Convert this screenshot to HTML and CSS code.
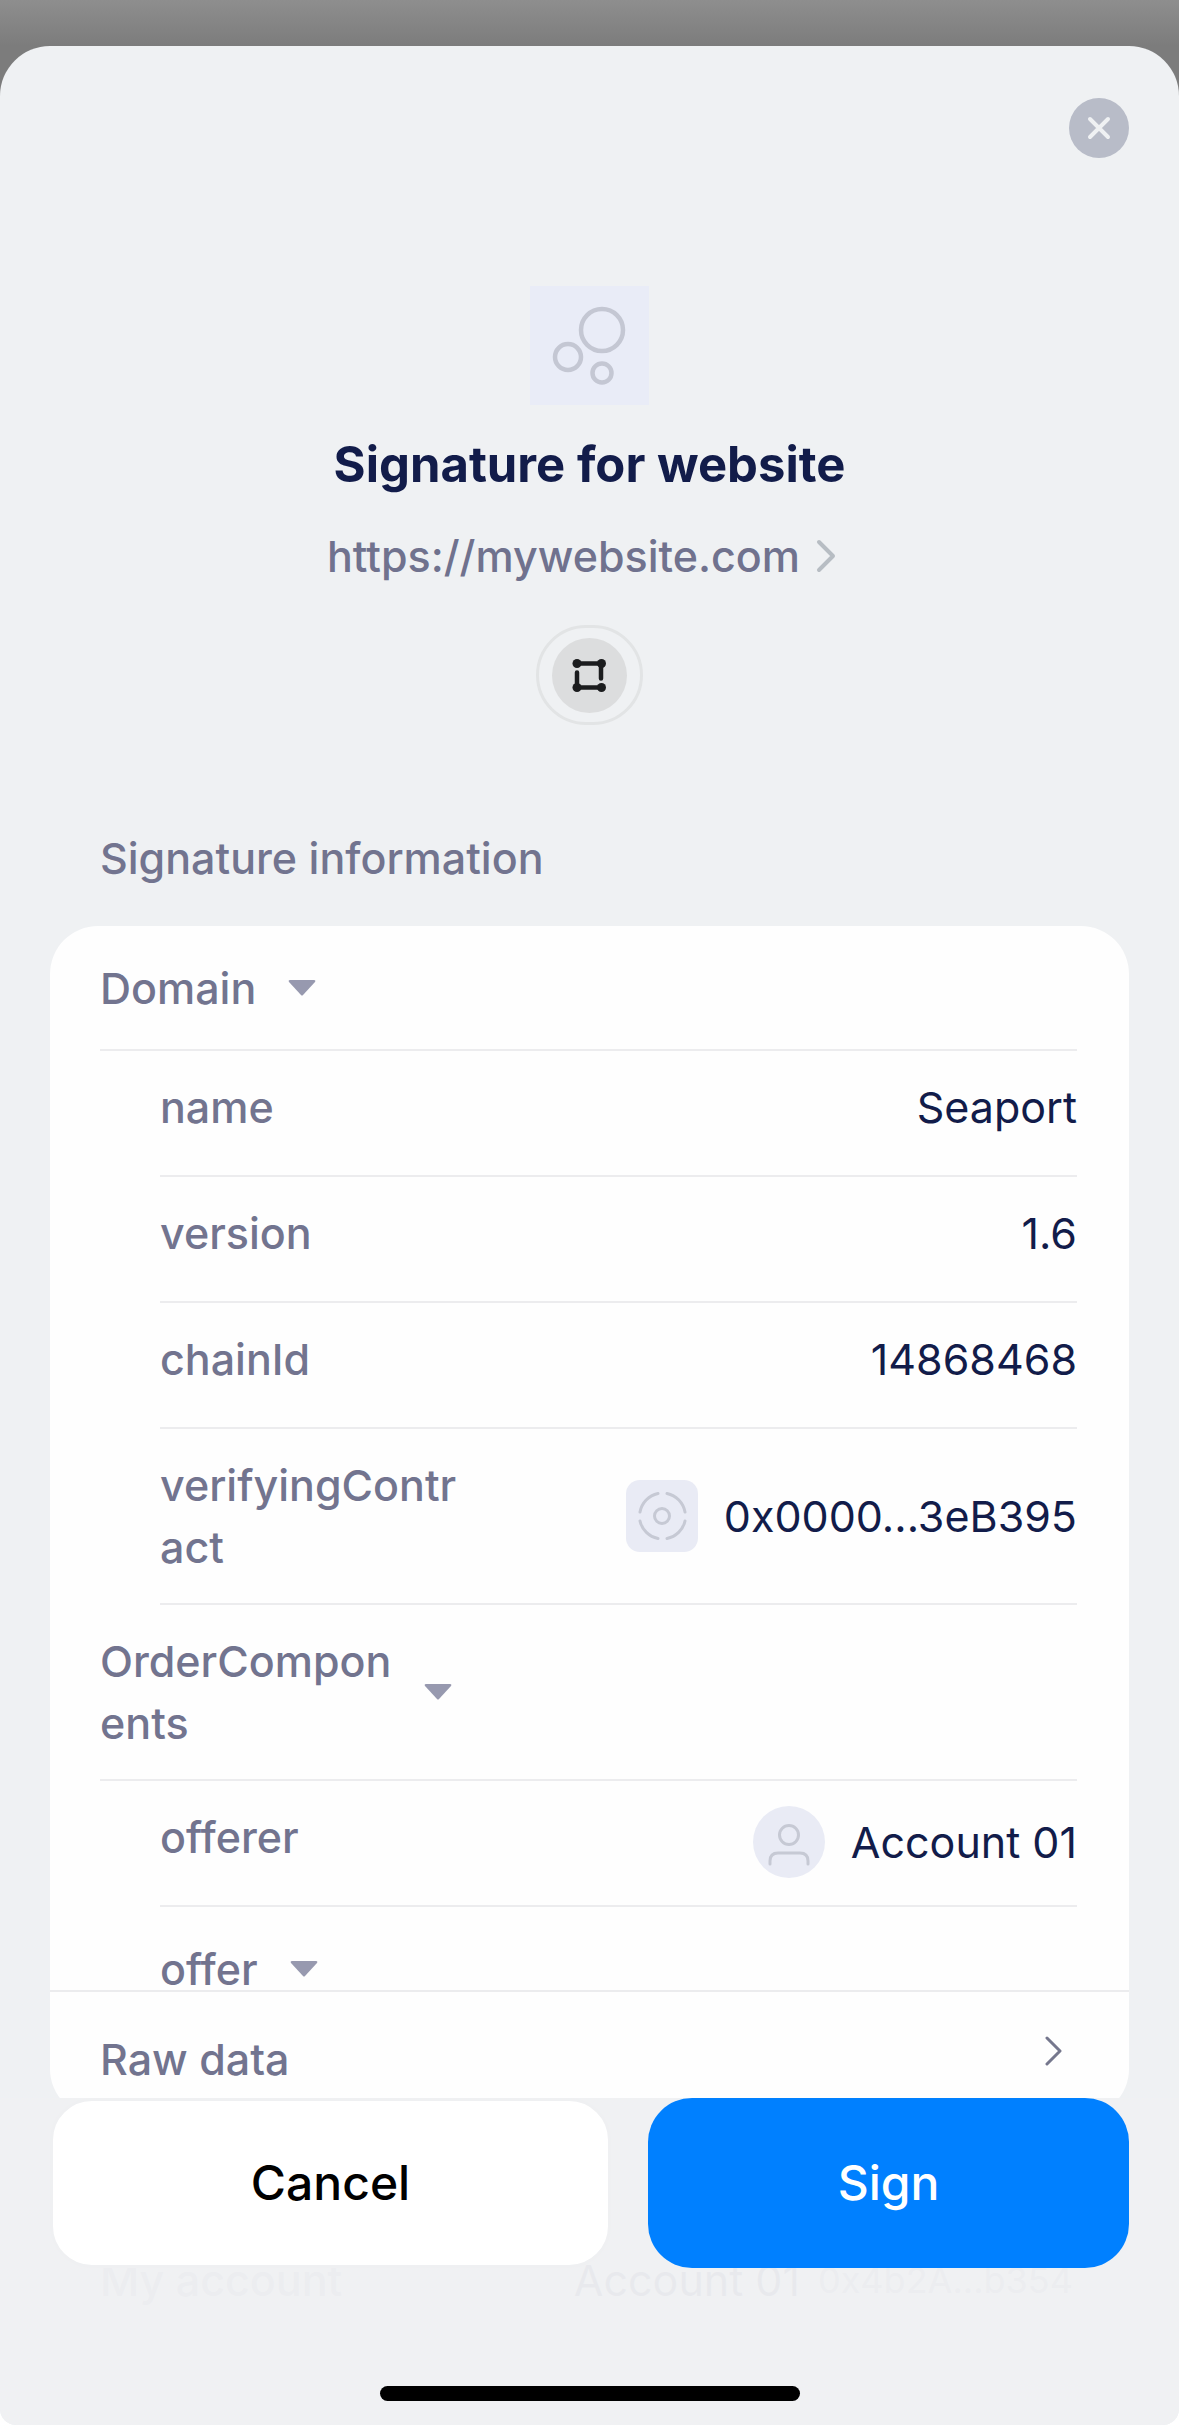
FILE: index.html
```html
<!DOCTYPE html>
<html lang="en">
<head>
    <meta charset="UTF-8">
    <meta name="viewport" content="width=device-width, initial-scale=1.0">
    <title>Signature for website</title>
    <link rel="stylesheet" href="styles.css">
</head>
<body>
    <div class="sheet">
        <div class="top">
            <button class="close" aria-label="Close">
                <svg width="60" height="60" viewBox="0 0 60 60" fill="none" stroke="#eff1f3" stroke-width="4" stroke-linecap="round">
                    <path d="M21 21l18 18M39 21L21 39"/>
                </svg>
            </button>
        </div>

        <header class="site">
            <svg class="site-icon" width="119" height="119" viewBox="0 0 119 119" fill="none" stroke="#c4c7d3" stroke-width="4.500">
                <circle cx="72" cy="44" r="21"/>
                <circle cx="38" cy="71" r="13"/>
                <circle cx="72" cy="87" r="9.500"/>
            </svg>
            <h1>Signature for website</h1>
            <a class="url" href="#">
                <span>https://mywebsite.com</span>
                <svg width="20" height="34" viewBox="0 0 20 34" fill="none" stroke="#b7bdc3" stroke-width="4" stroke-linecap="round" stroke-linejoin="round">
                    <path d="M3 3l14 14L3 31"/>
                </svg>
            </a>
            <div class="network">
                <svg width="75" height="75" viewBox="0 0 75 75">
                    <circle cx="37.5" cy="37.5" r="37.5" fill="#dcddde"/>
                    <g fill="#1b1c1e">
                        <path d="M25 25.500h24v15M49 49.500H25v-15" fill="none" stroke="#1b1c1e" stroke-width="4.500" stroke-linecap="round"/>
                        <circle cx="25" cy="25.500" r="4.500"/>
                        <circle cx="49.500" cy="25.500" r="4.500"/>
                        <circle cx="25" cy="49.500" r="4.500"/>
                        <circle cx="49.500" cy="49.500" r="4.500"/>
                    </g>
                </svg>
            </div>
        </header>

        <main>
            <h2>Signature information</h2>
            <div class="card">
                <div class="data">
                    <button class="row group">
                        <span class="label">Domain</span>
                        <svg class="caret" width="28" height="18" viewBox="0 0 28 18"><path d="M2 1h24q2 0 1 2L15 16q-1 1-2 0L1 3q-1-2 1-2z" fill="#9799af"/></svg>
                    </button>
                    <div class="row nested">
                        <span class="label">name</span>
                        <span class="value">Seaport</span>
                    </div>
                    <div class="row nested">
                        <span class="label">version</span>
                        <span class="value">1.6</span>
                    </div>
                    <div class="row nested">
                        <span class="label">chainId</span>
                        <span class="value">14868468</span>
                    </div>
                    <div class="row nested">
                        <span class="label">verifyingContr<wbr>act</span>
                        <span class="value">
                            <svg class="contract" width="72" height="72" viewBox="0 0 72 72" fill="none" stroke="#c6c9d4" stroke-width="3" stroke-linecap="round">
                                <circle cx="36" cy="36" r="7.500"/>
                                <path d="M41 13.500A23 23 0 0 1 59 32M59 41A23 23 0 0 1 41 58.500M32 58.500A23 23 0 0 1 14 41M14 32A23 23 0 0 1 32 13.500"/>
                            </svg>
                            0x0000...3eB395
                        </span>
                    </div>
                    <button class="row group">
                        <span class="label">OrderCompon<wbr>ents</span>
                        <svg class="caret" width="28" height="18" viewBox="0 0 28 18"><path d="M2 1h24q2 0 1 2L15 16q-1 1-2 0L1 3q-1-2 1-2z" fill="#9799af"/></svg>
                    </button>
                    <div class="row nested">
                        <span class="label">offerer</span>
                        <span class="value">
                            <svg class="avatar" width="72" height="72" viewBox="0 0 72 72" fill="none" stroke="#c6c9d4" stroke-width="3" stroke-linecap="round">
                                <circle cx="36" cy="29" r="9.500"/>
                                <path d="M17 58v-3q0-8 8-8h22q8 0 8 8v3"/>
                            </svg>
                            Account 01
                        </span>
                    </div>
                    <button class="row nested">
                        <span class="label">offer</span>
                        <svg class="caret" width="28" height="18" viewBox="0 0 28 18"><path d="M2 1h24q2 0 1 2L15 16q-1 1-2 0L1 3q-1-2 1-2z" fill="#9799af"/></svg>
                    </button>
                </div>
                <button class="raw">
                    <span>Raw data</span>
                    <svg width="18" height="46" viewBox="0 0 18 46" fill="none" stroke="#75778d" stroke-width="3" stroke-linecap="round" stroke-linejoin="round">
                        <path d="M2 2l13 13L2 28"/>
                    </svg>
                </button>
            </div>
            <div class="account">
                <span class="account-label">My account</span>
                <span>Account 01</span>
                <span class="account-address">0x4b2A...b354</span>
            </div>
        </main>

        <footer>
            <div class="actions">
                <button class="cancel">Cancel</button>
                <button class="sign">Sign</button>
            </div>
            <div class="home-bar"></div>
        </footer>
    </div>
</body>
</html>
```
FILE: styles.css
```css
* {
    box-sizing: border-box;
}
body {
    margin: 0;
    padding-top: 46px;
    min-height: 100vh;
    display: flex;
    background: #fff linear-gradient(#8e8e8e, #7c7c7c 46px) top / 100% 120px no-repeat;
    font-family: Inter, "Liberation Sans", sans-serif;
    font-size: 43px;
    line-height: 62px;
    color: #121c4a;
}
button {
    border: none;
    padding: 0;
    background: none;
    font: inherit;
    color: inherit;
    text-align: left;
    cursor: pointer;
}
svg {
    display: block;
    flex: none;
}
.sheet {
    position: relative;
    flex: 1;
    display: flex;
    flex-direction: column;
    background: #eff1f3;
    border-radius: 50px 50px 16px 16px;
    overflow: hidden;
}
.top {
    display: flex;
    justify-content: flex-end;
    padding: 52px 50px 0;
}
.close {
    width: 60px;
    height: 60px;
    border-radius: 50%;
    background: #b8bcc8;
}

/* website */
.site {
    display: flex;
    flex-direction: column;
    align-items: center;
    padding-top: 128px;
}
.site-icon {
    background: #e9ecf7;
}
h1 {
    margin: 30px 0 0;
    font-size: 49px;
    font-weight: 700;
    line-height: 60px;
}
.url {
    display: flex;
    align-items: center;
    gap: 16px;
    margin-top: 30px;
    margin-right: 16px;
    font-weight: 500;
    color: #70728e;
    text-decoration: none;
}
.network {
    display: flex;
    align-items: center;
    justify-content: center;
    width: 107px;
    height: 100px;
    margin-top: 38px;
    border: 3px solid #e2e4e5;
    border-radius: 50px;
}

/* signature data */
main {
    padding: 0 50px;
    color: #72748f;
}
h2 {
    margin: 102px 50px 37px;
    font-size: 43px;
    font-weight: 500;
}
.card {
    border-radius: 48px;
    background: #fefefe;
    overflow: hidden;
}
.data {
    display: flex;
    flex-direction: column;
    height: 1064px;
    padding: 0 52px 0 50px;
    overflow: hidden;
}
.row {
    display: flex;
    flex: none;
    flex-wrap: wrap;
    align-content: flex-start;
    justify-content: space-between;
    min-height: 125px;
    padding: 25px 0;
    border-bottom: 2px solid #ececee;
}
button.row {
    align-items: center;
    align-content: center;
    justify-content: flex-start;
    gap: 32px;
}
.nested {
    min-height: 126px;
    margin-left: 60px;
}
.label {
    max-width: 300px;
    font-weight: 500;
}
.group .label {
    max-width: 292px;
}
.value {
    display: flex;
    align-items: center;
    gap: 26px;
    color: #121c4a;
}
.contract {
    border-radius: 14px;
    background: #e9ebf5;
}
.avatar {
    border-radius: 50%;
    background: #e9ebf5;
}
.raw {
    display: flex;
    align-items: center;
    justify-content: space-between;
    width: 100%;
    padding: 36px 66px 27px 50px;
    border-top: 2px solid #ececee;
    font-weight: 500;
}
.account {
    display: flex;
    gap: 18px;
    padding: 132px 56px 0 50px;
    color: #121c4a;
}
.account-label {
    margin-right: auto;
    font-weight: 500;
    color: #72748f;
}
.account-address {
    font-size: 36px;
    color: #72748f;
}

/* buttons */
footer {
    position: absolute;
    left: 0;
    right: 0;
    bottom: 0;
    padding: 0 50px 24px;
    background: rgba(239, 241, 243, 0.97);
}
.actions {
    display: grid;
    grid-template-columns: 7fr 6fr;
    gap: 37px;
}
.actions button {
    height: 170px;
    font-size: 48px;
    font-weight: 500;
    text-align: center;
}
.cancel {
    border: 3px solid #eff0f2;
    border-radius: 42px;
    background: #fff;
    color: #000;
}
.actions .sign {
    border-radius: 44px;
    background: #0080ff;
    color: #fff;
}
.home-bar {
    width: 420px;
    height: 15px;
    margin: 118px auto 0;
    border-radius: 8px;
    background: #000;
}
```
